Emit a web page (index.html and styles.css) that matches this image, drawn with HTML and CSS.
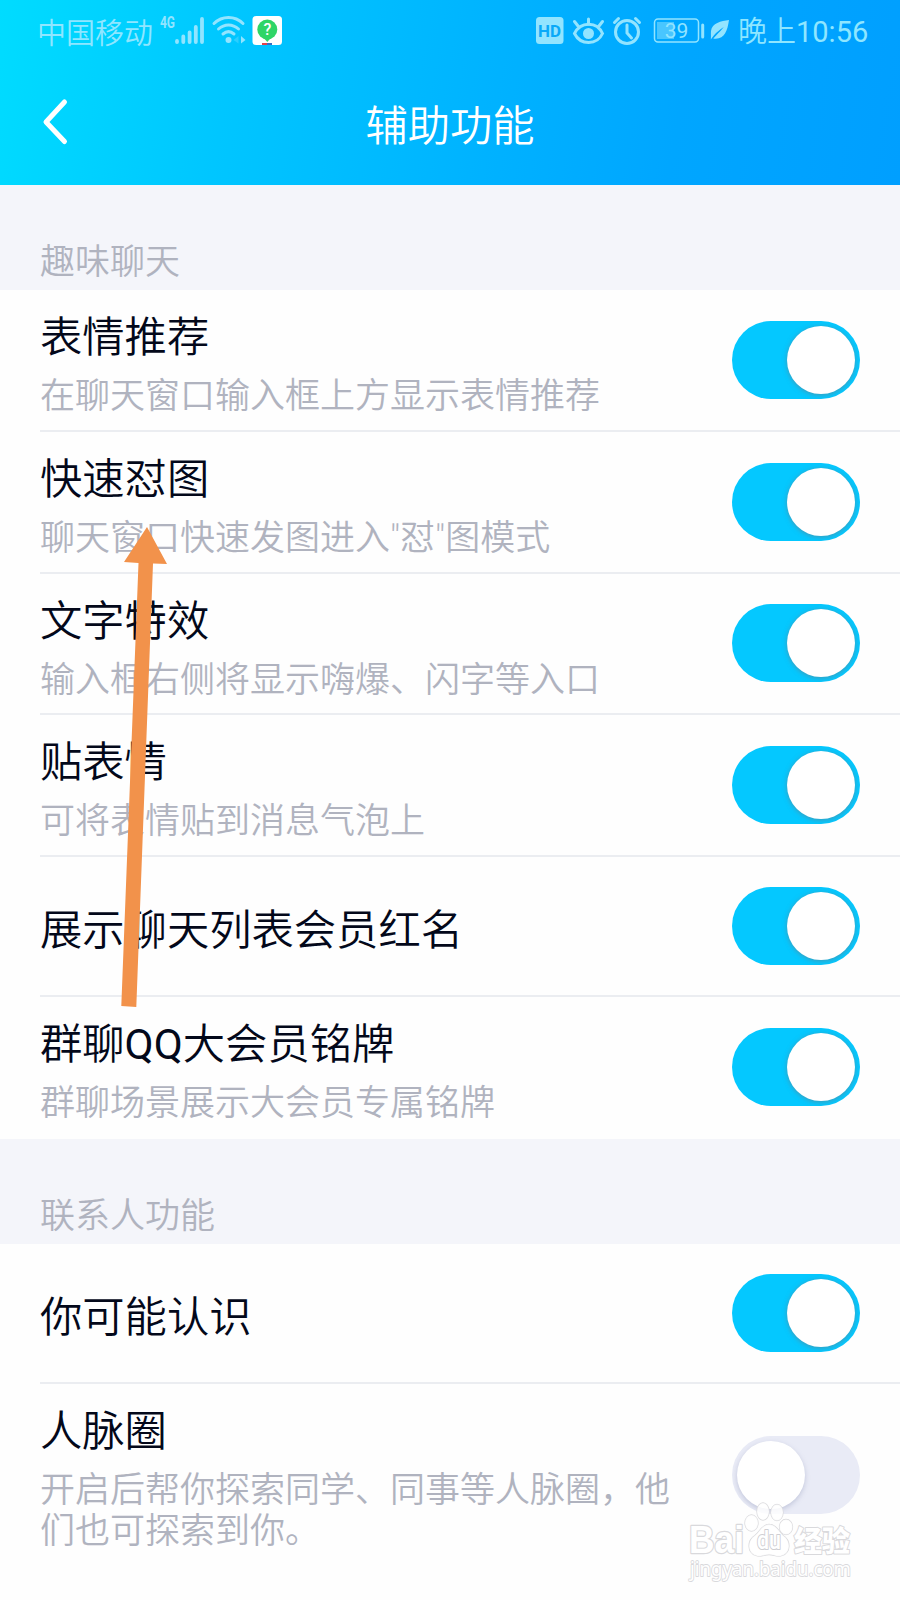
FILE: index.html
```
<!DOCTYPE html>
<html lang="zh-CN">
<head>
    <meta charset="UTF-8">
    <title>辅助功能</title>
    <link rel="stylesheet" href="styles.css">
</head>
<body>
    <div class="page">
        <header class="header">
            <div class="status">
                <span class="carrier">中国移动</span>
                <svg class="signal" width="130" height="40" viewBox="0 0 130 40">
                    <text class="net" x="3" y="22" textLength="15" lengthAdjust="spacingAndGlyphs">4G</text>
                    <g class="line bars">
                        <path d="M20 35v1M26.300 30.500v5.500M32.600 26.500v9.500M38.800 21v15M45 13v23"/>
                    </g>
                    <g class="line">
                        <path d="M57 17.500c8-8 21-8 29 0M61.500 23c6-5.500 14-5.500 20 0M66 28c3.500-3 7.500-3 11 0"/>
                    </g>
                    <circle class="fill" cx="71.500" cy="34" r="3"/>
                    <path class="fill" d="M84 30l4.500 4-4.500 3.500z"/>
                    <path class="fill dim" d="M81.500 30l-5 4 5 3.500z"/>
                    <rect x="95.500" y="10" width="29.500" height="29" rx="3.500" fill="#fff"/>
                    <circle cx="110.300" cy="23.500" r="10" fill="#2fd566"/>
                    <path d="M106 31l4.300 5 4.300-5z" fill="#2fd566"/>
                    <text class="ask" x="110.300" y="29" text-anchor="middle">?</text>
                    <path d="M105 38h5" stroke="#e0414b" stroke-width="2"/>
                    <path d="M110 38h5" stroke="#3b6fc0" stroke-width="2"/>
                </svg>
                <svg class="tools" width="200" height="40" viewBox="0 0 200 40">
                    <rect class="fill" x="3" y="11" width="27.500" height="27" rx="3.500"/>
                    <text class="hd" x="5" y="31" textLength="23" lengthAdjust="spacingAndGlyphs">HD</text>
                    <g class="line">
                        <path d="M41.500 27.500c6-12.500 22.500-12.500 28 0c-5.500 12-22 12-28 0z"/>
                        <path d="M55.500 18v-5M45 20l-3.500-4.500M66 20l3.500-4.500"/>
                        <circle cx="94" cy="26" r="11.500"/>
                        <path d="M94 19v8l4.500 5M81.500 16.500l4-4M102.500 12.500l4 4"/>
                    </g>
                    <circle class="fill" cx="55.500" cy="27.500" r="5.500"/>
                    <rect class="fill half" x="124" y="16" width="17" height="17"/>
                    <rect class="line thin" x="121.500" y="13" width="44" height="23" rx="3.500"/>
                    <text class="level" x="143.500" y="31.500" text-anchor="middle">39</text>
                    <path class="line" d="M169.700 19v12"/>
                    <path class="fill" d="M196 14c-8 1-17 3-18 11c-.3 3 .2 5-.2 8.500c4-6 8-9 13-12.500c-4 5-7.500 8-10.500 11.500c11 1.500 14-7 15.700-18.500z"/>
                </svg>
                <span class="time">晚上<span class="clock">10:56</span></span>
            </div>
            <div class="nav">
                <svg class="back" width="30" height="50" viewBox="0 0 30 50">
                    <path d="M25.500 5L7 25l18.500 19.500"/>
                </svg>
                <h1>辅助功能</h1>
            </div>
        </header>

        <h2 class="group">趣味聊天</h2>
        <div class="row">
            <div class="text">
                <div class="name">表情推荐</div>
                <div class="desc">在聊天窗口输入框上方显示表情推荐</div>
            </div>
            <div class="switch on"></div>
        </div>
        <div class="row">
            <div class="text">
                <div class="name">快速怼图</div>
                <div class="desc">聊天窗口快速发图进入"怼"图模式</div>
            </div>
            <div class="switch on"></div>
        </div>
        <div class="row">
            <div class="text">
                <div class="name">文字特效</div>
                <div class="desc">输入框右侧将显示嗨爆、闪字等入口</div>
            </div>
            <div class="switch on"></div>
        </div>
        <div class="row">
            <div class="text">
                <div class="name">贴表情</div>
                <div class="desc">可将表情贴到消息气泡上</div>
            </div>
            <div class="switch on"></div>
        </div>
        <div class="row single">
            <div class="text">
                <div class="name">展示聊天列表会员红名</div>
            </div>
            <div class="switch on"></div>
        </div>
        <div class="row last">
            <div class="text">
                <div class="name">群聊<span class="latin">QQ</span>大会员铭牌</div>
                <div class="desc">群聊场景展示大会员专属铭牌</div>
            </div>
            <div class="switch on"></div>
        </div>

        <h2 class="group">联系人功能</h2>
        <div class="row single">
            <div class="text">
                <div class="name">你可能认识</div>
            </div>
            <div class="switch on"></div>
        </div>
        <div class="row tall">
            <div class="text">
                <div class="name">人脉圈</div>
                <div class="desc">开启后帮你探索同学、同事等人脉圈，他们也可探索到你。</div>
            </div>
            <div class="switch"></div>
        </div>

        <svg class="arrow" width="50" height="490" viewBox="0 0 50 490">
            <path d="M27 7L47 44L33 43.500L16.300 487L1.300 486L18.500 43L4 42z"/>
        </svg>

        <svg class="watermark" width="180" height="90" viewBox="0 0 180 90">
            <text class="brand" x="8" y="56" textLength="55" lengthAdjust="spacingAndGlyphs">Bai</text>
            <g class="paw">
                <ellipse cx="70.500" cy="26" rx="6.500" ry="8"/>
                <ellipse cx="82" cy="14.500" rx="6" ry="8.500"/>
                <ellipse cx="96" cy="15.500" rx="6" ry="8"/>
                <ellipse cx="105" cy="30" rx="6.500" ry="7.500"/>
                <path d="M88 27.500c7 0 9 6 14 11c8 5 8 17-1 20c-5 2-8-1-13-1c-5 0-8 3-13 1c-9-3-9-15-1-20c5-4 7-11 14-11z"/>
            </g>
            <text class="du" x="76" y="52" textLength="24" lengthAdjust="spacingAndGlyphs">du</text>
            <text class="exp" x="113" y="55" textLength="56" lengthAdjust="spacingAndGlyphs">经验</text>
            <text class="url" x="9" y="79" textLength="161" lengthAdjust="spacingAndGlyphs">jingyan.baidu.com</text>
        </svg>
    </div>
</body>
</html>
```
FILE: styles.css
```
* {
    box-sizing: border-box;
}
body {
    margin: 0;
    background-color: #fefefe;
    font-family: Roboto, "Noto Sans CJK SC", sans-serif;
    font-weight: 350;
}
.page {
    position: relative;
    width: 900px;
    height: 1600px;
    overflow: hidden;
}
.header {
    height: 185px;
    background: linear-gradient(100deg, #00dcff 0%, #00c6ff 26%, #00b2ff 55%, #00a6ff 75%, #009fff 100%);
}
.status {
    display: flex;
    align-items: center;
    height: 62px;
    padding: 0 30px 0 37px;
    color: #8fe6ff;
}
.carrier {
    width: 120px;
    padding-bottom: 1px;
    font-size: 29px;
    white-space: nowrap;
}
.signal {
    margin-bottom: 10px;
}
.tools {
    margin: 0 5px 10px 246px;
}
.time {
    padding-top: 1px;
    font-size: 29px;
    line-height: 40px;
    white-space: nowrap;
}
.clock {
    font-weight: 400;
}
.fill {
    fill: #92e4ff;
}
.dim {
    opacity: 0.3;
}
.half {
    opacity: 0.5;
}
.line {
    fill: none;
    stroke: #92e4ff;
    stroke-width: 3;
    stroke-linecap: round;
}
.bars {
    stroke-width: 3.8;
}
.thin {
    stroke-width: 1.5;
}
.net {
    fill: #92e4ff;
    font-size: 16px;
    font-weight: 700;
}
.ask {
    fill: #fff;
    font-size: 16px;
    font-weight: 500;
}
.hd {
    fill: #0aa9f8;
    font-size: 17px;
    font-weight: 700;
}
.level {
    fill: #92e4ff;
    font-size: 21px;
    font-weight: 400;
}
.nav {
    display: grid;
    grid-template-columns: 80px 1fr 80px;
    align-items: center;
    height: 123px;
    padding-bottom: 3px;
}
.back {
    margin-left: 39px;
}
.back path {
    fill: none;
    stroke: #fff;
    stroke-width: 5;
    stroke-linecap: round;
    stroke-linejoin: round;
}
h1 {
    margin: 0;
    color: #fff;
    font-size: 42.3px;
    font-weight: 350;
    text-align: center;
}
.group {
    height: 105px;
    margin: 0;
    padding: 53px 40px 0;
    background-color: #f4f5fa;
    color: #b0b3bf;
    font-size: 35px;
    font-weight: 350;
    line-height: 50px;
}
.row {
    display: flex;
    justify-content: space-between;
    align-items: center;
    height: 141.750px;
    margin-left: 40px;
    padding-right: 40px;
    border-bottom: 2px solid #ebedf1;
}
.single {
    height: 140px;
}
.last,
.tall {
    border-bottom: none;
}
.last .switch {
    margin-bottom: 2px;
}
.tall {
    align-items: flex-start;
    height: 218px;
}
.tall .switch {
    margin-top: 52px;
}
.text {
    width: 640px;
    align-self: flex-start;
    padding-top: 23px;
}
.single .text {
    align-self: center;
    padding-top: 10px;
}
.name {
    color: #03081a;
    font-size: 42.3px;
    line-height: 50px;
}
.latin {
    font-weight: 400;
}
.desc {
    margin-top: 13px;
    color: #b0b3bf;
    font-size: 35px;
    line-height: 41px;
}
.switch {
    display: flex;
    align-items: center;
    flex: none;
    width: 128px;
    height: 78px;
    padding: 0 5px;
    border-radius: 39px;
    background-color: #e9ebf6;
    overflow: hidden;
}
.switch::before {
    content: "";
    width: 68px;
    height: 68px;
    border-radius: 50%;
    background-color: #fff;
    box-shadow: 0 2px 5px rgba(120, 130, 170, 0.35);
}
.on {
    justify-content: flex-end;
    background-color: #04c8ff;
}
.on::before {
    box-shadow: 0 1px 5px rgba(110, 120, 130, 0.6);
}
.arrow {
    position: absolute;
    left: 120px;
    top: 520px;
    fill: #f2924b;
}
.watermark {
    position: absolute;
    left: 681px;
    top: 1497px;
    fill: #fff;
    stroke: #d9d9dc;
    stroke-width: 2;
    stroke-linejoin: round;
    paint-order: stroke;
}
.paw {
    stroke-width: 1.3;
    fill-opacity: 0.85;
}
.brand {
    font-family: "Liberation Sans", sans-serif;
    font-size: 38px;
    font-weight: 700;
    stroke-width: 2.4;
}
.du {
    font-size: 25px;
    font-weight: 500;
    stroke: #cfcfd3;
}
.exp {
    font-size: 29px;
    font-weight: 900;
}
.url {
    font-family: "Noto Sans", sans-serif;
    font-size: 20px;
    font-weight: 400;
    stroke-width: 1.8;
}
```
